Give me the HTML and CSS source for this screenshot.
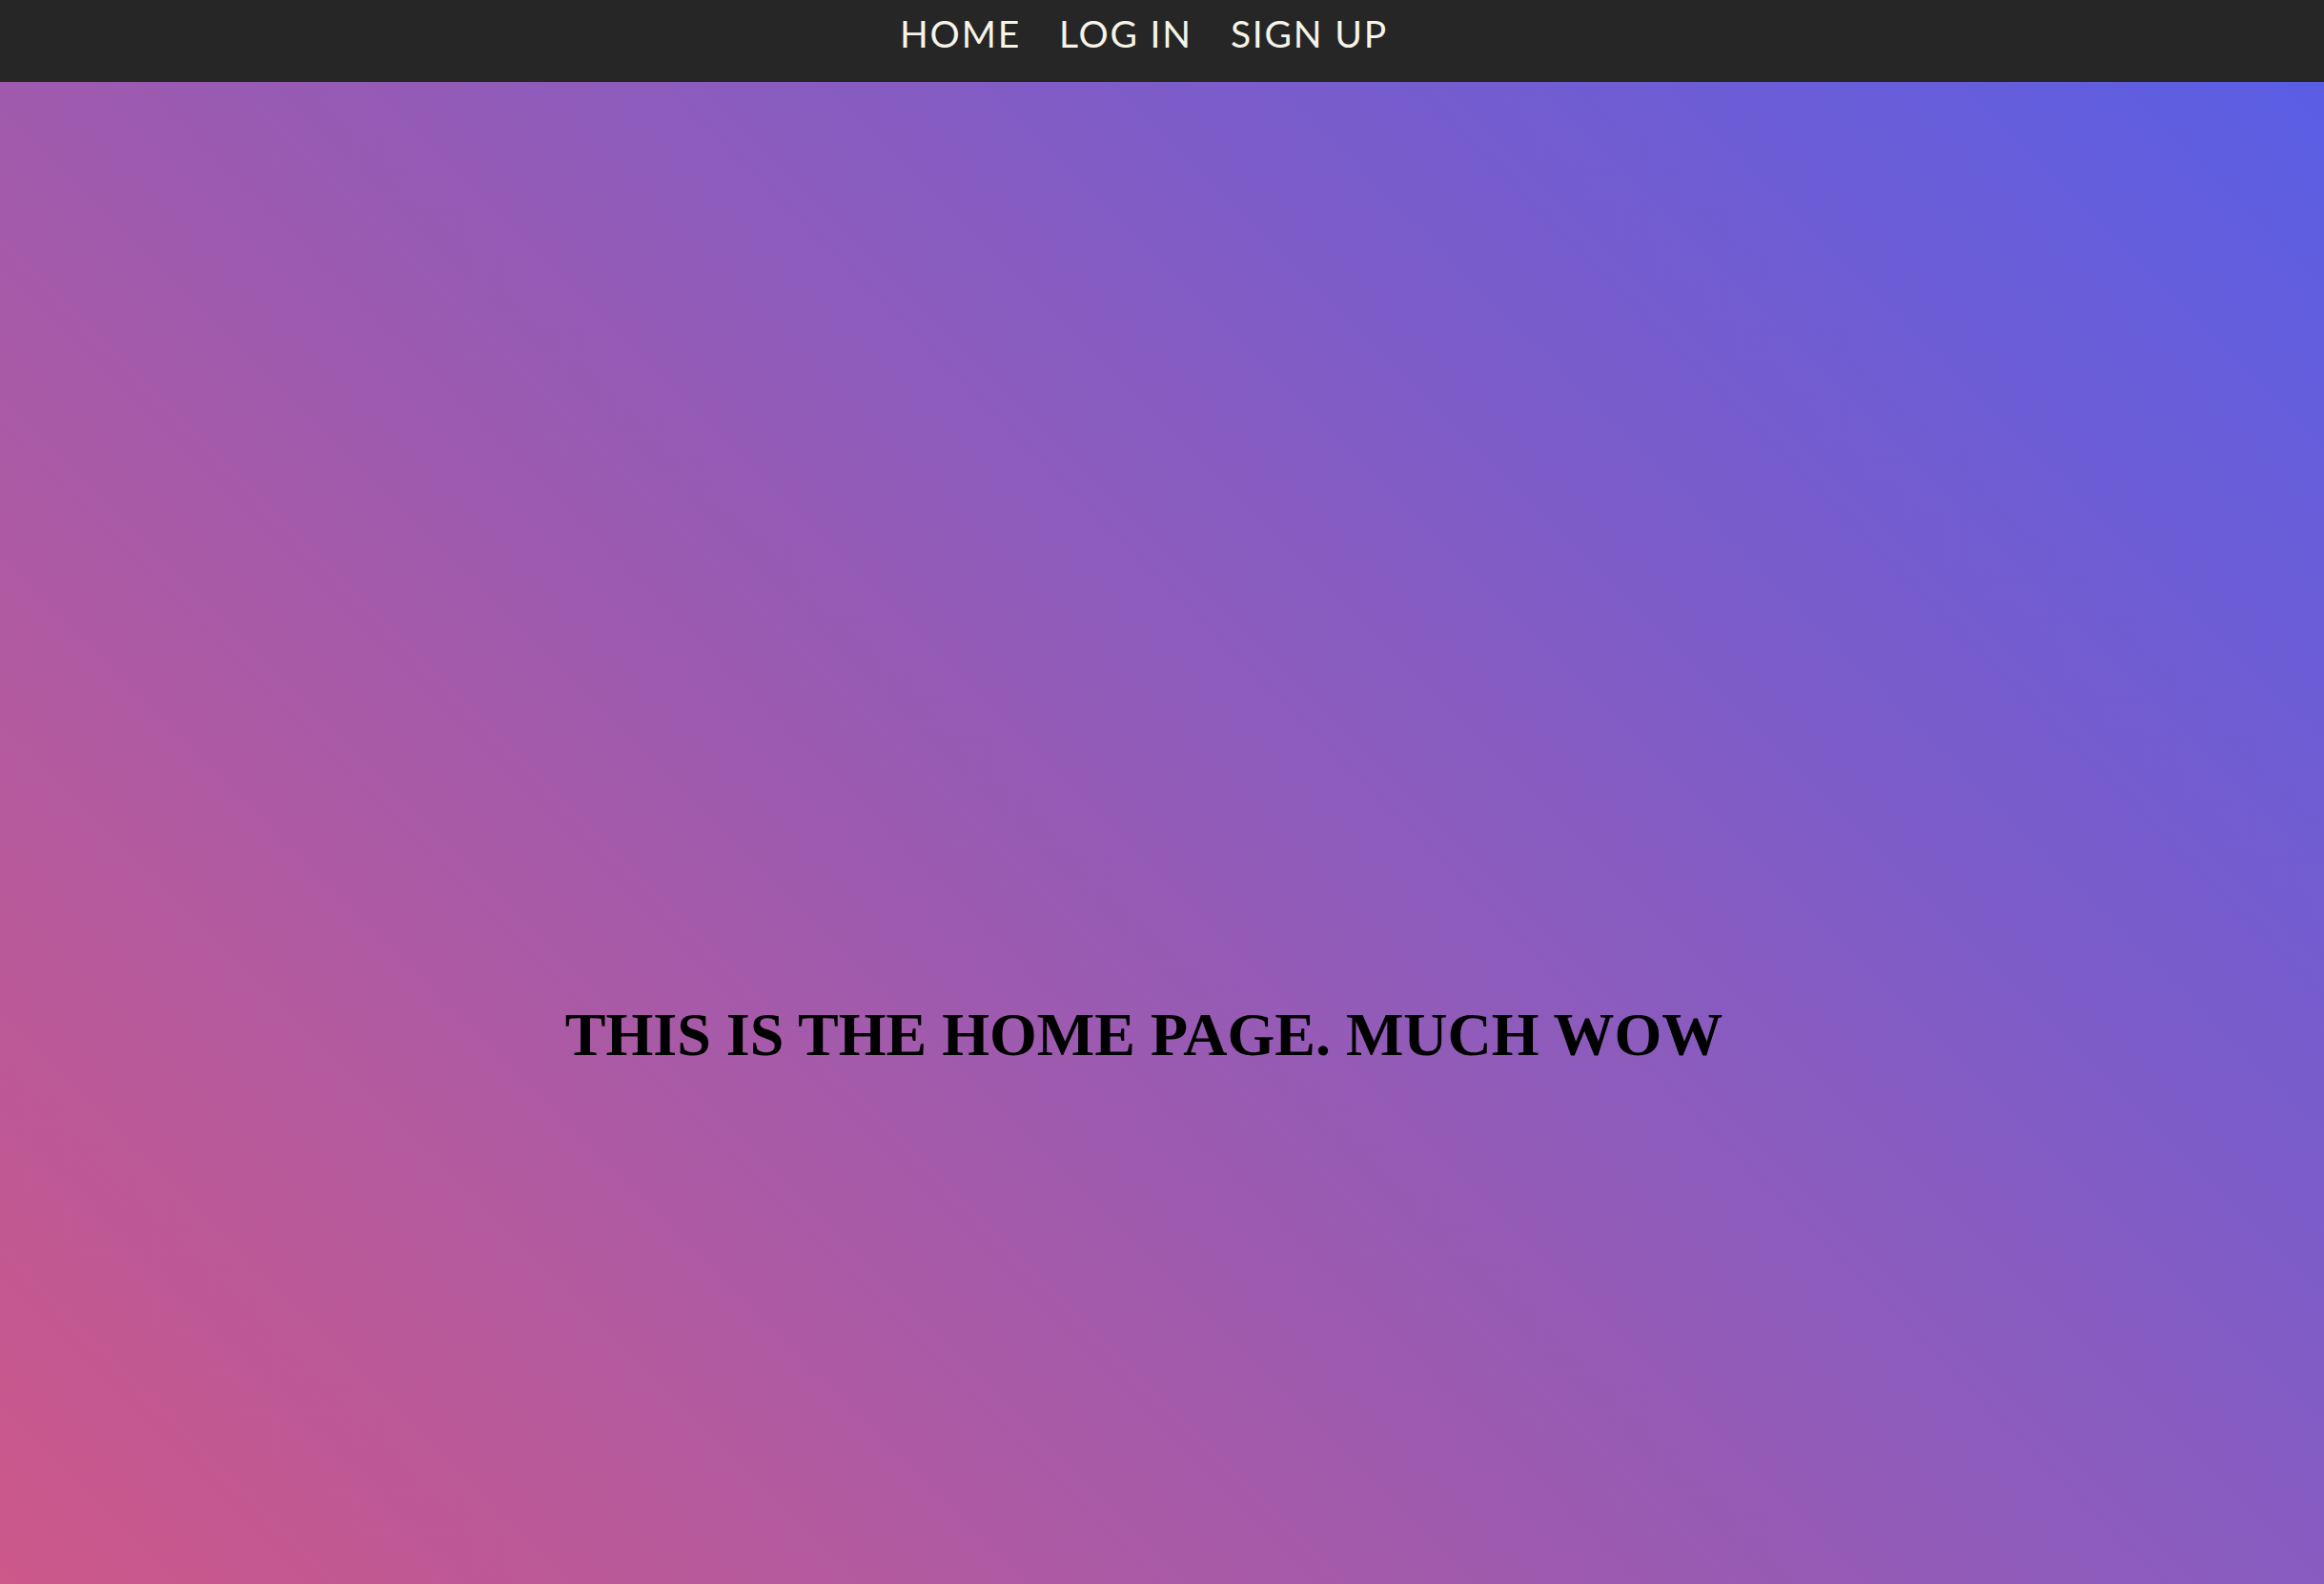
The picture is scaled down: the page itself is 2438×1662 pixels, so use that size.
FILE: index.html
```html
<!DOCTYPE html>
<html lang="en">
<head>
<meta charset="utf-8">
<title>Home</title>
<link rel="stylesheet" href="styles.css">
</head>
<body>
<nav class="topnav">
  <ul class="nav-list">
    <li class="nav-item"><a class="nav-link" href="#">HOME</a></li>
    <li class="nav-item"><a class="nav-link" href="#">LOG IN</a></li>
    <li class="nav-item"><a class="nav-link" href="#">SIGN UP</a></li>
  </ul>
</nav>
<main class="hero">
  <h1 class="hero-title">THIS IS THE HOME PAGE. MUCH WOW</h1>
</main>
</body>
</html>
```
FILE: styles.css
```css
html, body {
  margin: 0;
  padding: 0;
}

body {
  background: #262626;
}

.topnav {
  background: #262626;
  height: 86px;
  box-sizing: border-box;
  padding: 16px 38px 0 0;
}

.nav-list {
  list-style: none;
  margin: 0;
  padding: 0;
  display: flex;
  justify-content: center;
  gap: 40px;
}

.nav-link {
  font-family: Lato, "Open Sans", sans-serif;
  font-size: 39px;
  line-height: 39px;
  letter-spacing: 1.8px;
  color: #f6f4e7;
  text-decoration: none;
}

.hero {
  min-height: 1576px;
  box-sizing: border-box;
  padding: 963px 38px 0 0;
  background: linear-gradient(45deg, #cd588a 0%, #5a5ee4 100%);
}

.hero-title {
  margin: 0;
  text-align: center;
  font-family: "Liberation Serif", "Times New Roman", serif;
  font-weight: bold;
  font-size: 64px;
  line-height: normal;
  color: #000;
}
```
